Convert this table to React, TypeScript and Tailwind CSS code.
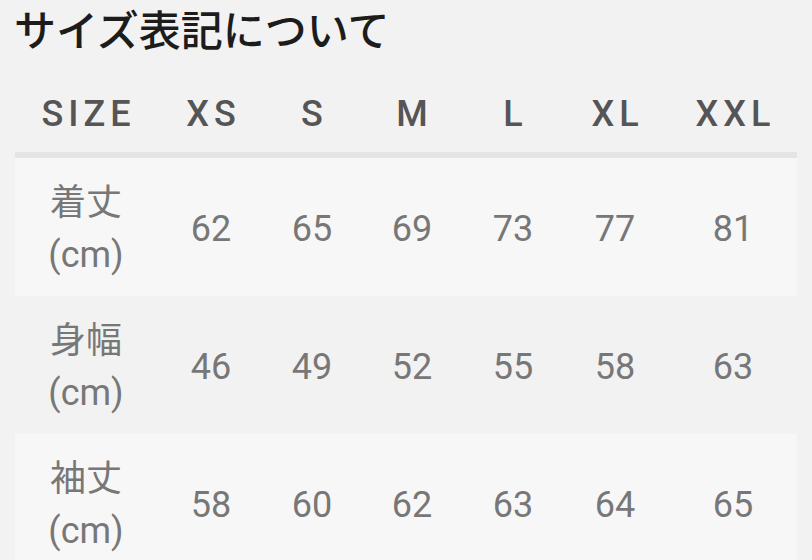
import React from 'react';

const sizes = ["XS", "S", "M", "L", "XL", "XXL"];

const rows = [
  { label: "着丈", values: [62, 65, 69, 73, 77, 81] },
  { label: "身幅", values: [46, 49, 52, 55, 58, 63] },
  { label: "袖丈", values: [58, 60, 62, 63, 64, 65] },
];

const cols = "grid grid-cols-[142px_108px_94px_106px_96px_108px_128px]";

export default function App() {
  return (
    <div
      className="min-h-[560px] w-[812px] overflow-hidden bg-[#f2f2f2]"
      style={{ fontFamily: '"Roboto", "Noto Sans CJK JP", sans-serif' }}
    >
      <h1 className="h-16 pl-[14px] text-[42px] font-medium leading-[64px] text-[#1c1c1c]">
        サイズ表記について
      </h1>
      <div className="mx-[15px] w-[782px]">
        <div className={`${cols} h-[94px] items-center border-b-[6px] border-[#e4e4e4] pt-3 text-[36px] font-medium tracking-[5px] text-[#555]`}>
          <div className="pl-[5px] text-center">SIZE</div>
          {sizes.map((s) => (
            <div key={s} className="pl-[5px] text-center">
              {s}
            </div>
          ))}
        </div>
        {rows.map((row, i) => (
          <div
            key={row.label}
            className={`${cols} h-[138px] items-center pt-1 text-[36px] text-[#777] ${i % 2 === 0 ? "bg-[#f7f7f7]" : "bg-[#f2f2f2]"}`}
          >
            <div className="text-center leading-[52px]">
              <div>{row.label}</div>
              <div>(cm)</div>
            </div>
            {row.values.map((v, j) => (
              <div key={j} className="text-center">
                {v}
              </div>
            ))}
          </div>
        ))}
      </div>
    </div>
  );
}
